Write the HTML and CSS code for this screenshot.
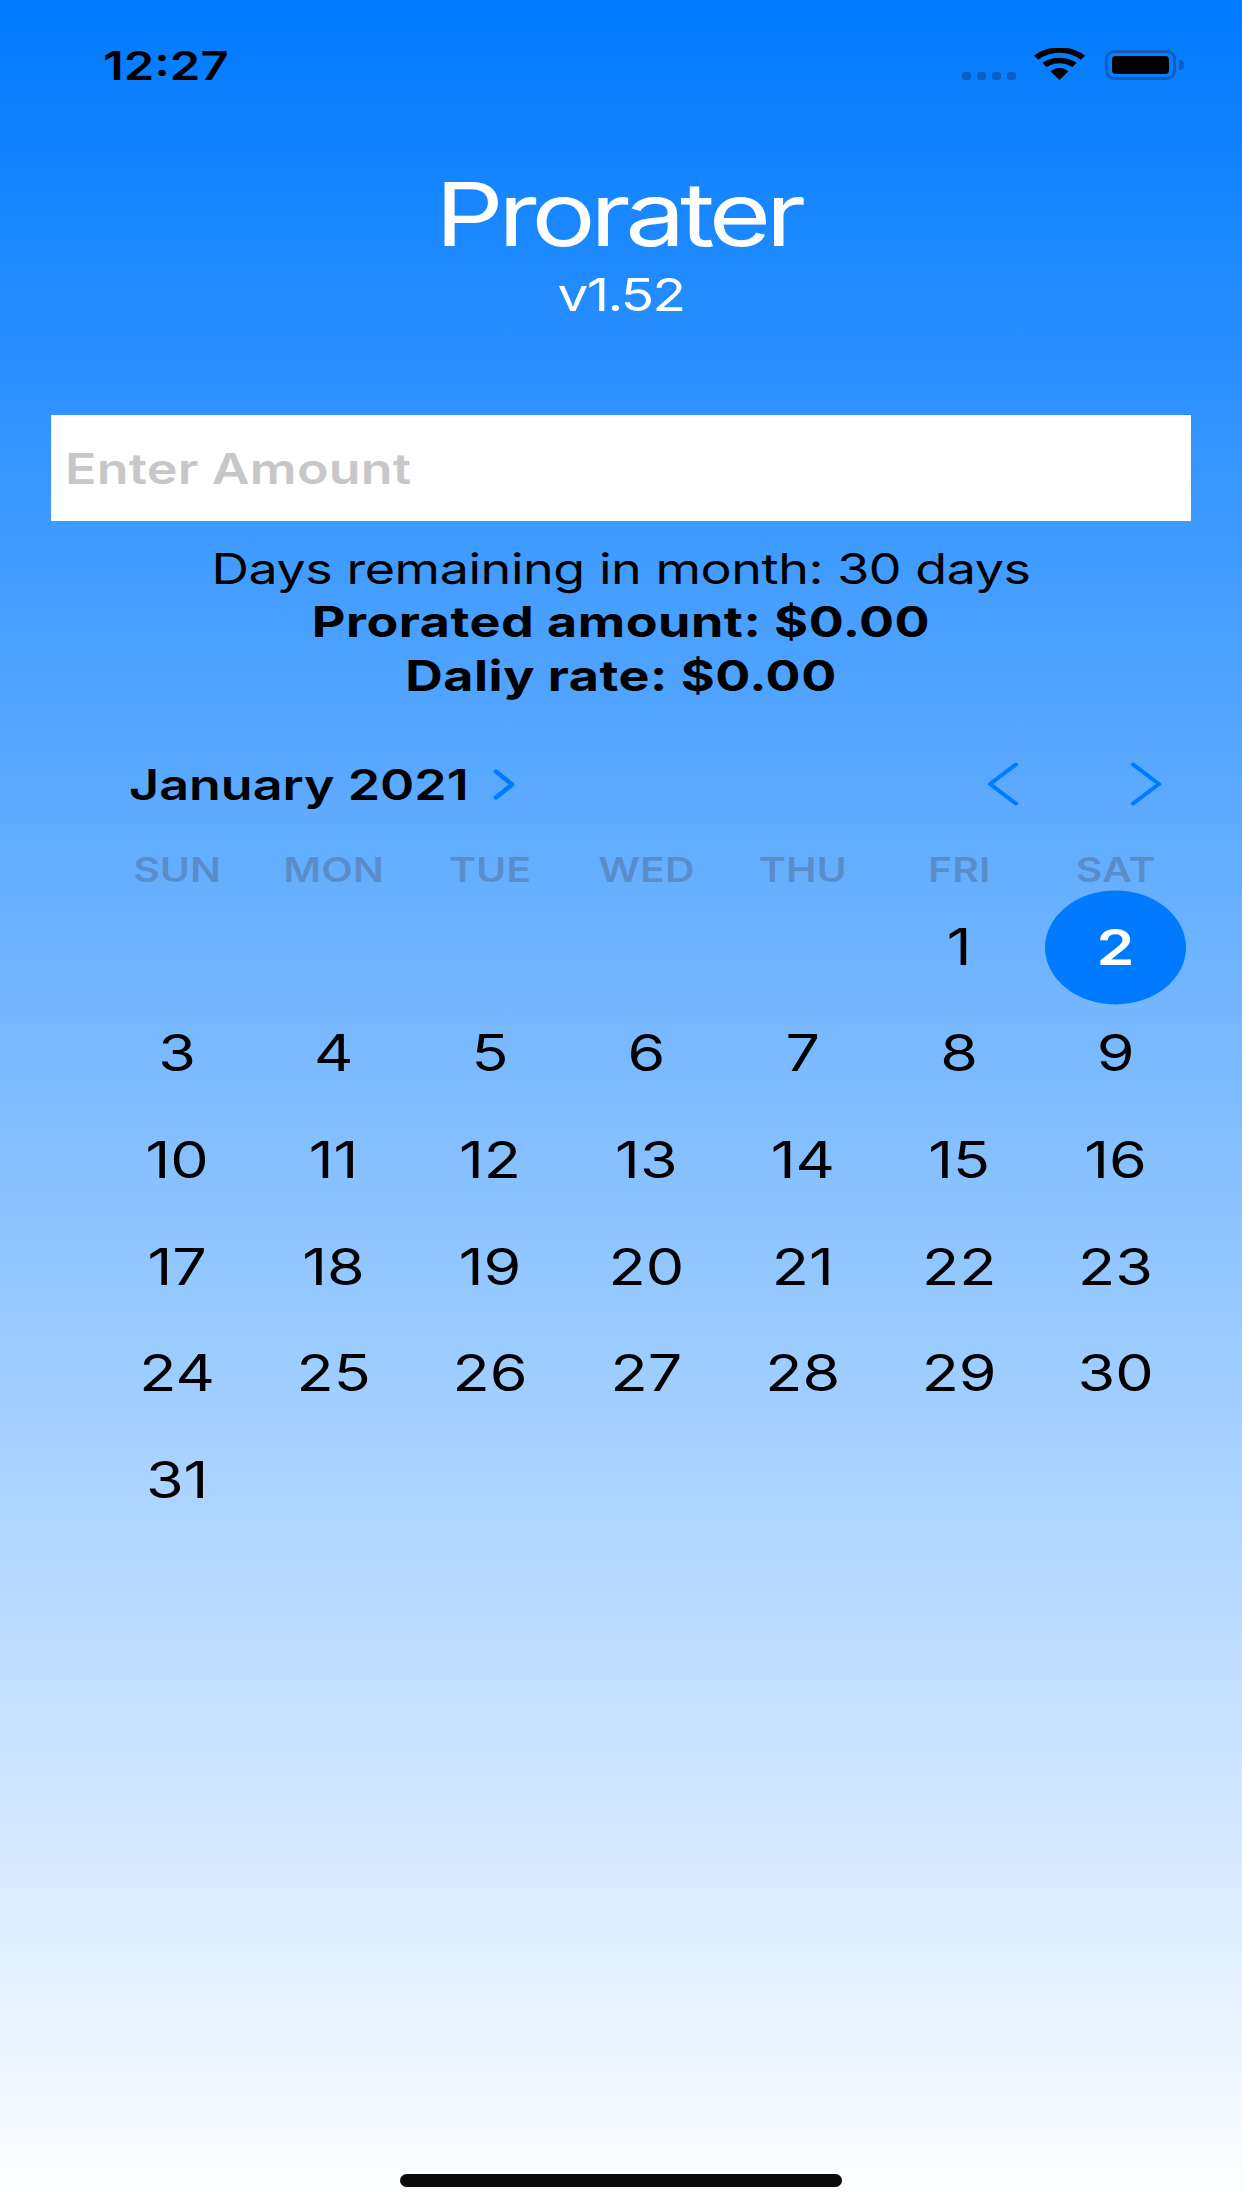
FILE: index.html
```html
<!DOCTYPE html>
<html lang="en">

<head>
    <meta charset="UTF-8">
    <meta name="viewport" content="width=device-width, initial-scale=1.0">
    <title>Prorater</title>
    <link rel="stylesheet" href="styles.css">
</head>

<body>
    <div class="screen">
        <div class="status-bar">
            <div class="status-time">12:27</div>
            <div class="status-icons">
                <div class="signal">
                    <span class="signal-dot"></span>
                    <span class="signal-dot"></span>
                    <span class="signal-dot"></span>
                    <span class="signal-dot"></span>
                </div>
                <svg class="wifi" width="53" height="32" viewBox="0 0 51 38" preserveAspectRatio="none">
                    <path d="M3 11.5C16 -0.5 35 -0.5 48 11.5" fill="none" stroke="#000" stroke-width="6.5"/>
                    <path d="M11 20C20 13 31 13 40 20" fill="none" stroke="#000" stroke-width="6.5"/>
                    <path d="M17 28C22 22.500 29 22.500 34 28L25.500 38Z" fill="#000"/>
                </svg>
                <div class="battery">
                    <div class="battery-level"></div>
                </div>
                <div class="battery-tip"></div>
            </div>
        </div>

        <h1 class="app-title">Prorater</h1>
        <div class="app-version">v1.52</div>

        <div class="amount-field">
            <input class="amount-input" type="text" placeholder="Enter Amount">
        </div>

        <div class="results">
            <div class="result-line">Days remaining in month: 30 days</div>
            <div class="result-line result-bold">Prorated amount: $0.00</div>
            <div class="result-line result-bold">Daliy rate: $0.00</div>
        </div>

        <div class="calendar">
            <div class="calendar-header">
                <div class="month-label">January 2021</div>
                <svg class="month-chevron" width="24" height="31" viewBox="0 0 24 38" preserveAspectRatio="none">
                    <path d="M4 3L20 19L4 35" fill="none" stroke="#007aff" stroke-width="5" stroke-linecap="round" stroke-linejoin="round"/>
                </svg>
                <div class="month-nav">
                    <svg width="32" height="44" viewBox="0 0 32 54" preserveAspectRatio="none">
                        <path d="M29 3L3 27L29 51" fill="none" stroke="#007aff" stroke-width="4.500" stroke-linecap="round" stroke-linejoin="round"/>
                    </svg>
                    <svg width="32" height="44" viewBox="0 0 32 54" preserveAspectRatio="none">
                        <path d="M3 3L29 27L3 51" fill="none" stroke="#007aff" stroke-width="4.500" stroke-linecap="round" stroke-linejoin="round"/>
                    </svg>
                </div>
            </div>

            <div class="weekdays">
                <div class="weekday">SUN</div>
                <div class="weekday">MON</div>
                <div class="weekday">TUE</div>
                <div class="weekday">WED</div>
                <div class="weekday">THU</div>
                <div class="weekday">FRI</div>
                <div class="weekday">SAT</div>
            </div>

            <div class="days">
                <div class="day"></div>
                <div class="day"></div>
                <div class="day"></div>
                <div class="day"></div>
                <div class="day"></div>
                <div class="day">1</div>
                <div class="day"><span class="day-selected">2</span></div>
                <div class="day">3</div>
                <div class="day">4</div>
                <div class="day">5</div>
                <div class="day">6</div>
                <div class="day">7</div>
                <div class="day">8</div>
                <div class="day">9</div>
                <div class="day">10</div>
                <div class="day">11</div>
                <div class="day">12</div>
                <div class="day">13</div>
                <div class="day">14</div>
                <div class="day">15</div>
                <div class="day">16</div>
                <div class="day">17</div>
                <div class="day">18</div>
                <div class="day">19</div>
                <div class="day">20</div>
                <div class="day">21</div>
                <div class="day">22</div>
                <div class="day">23</div>
                <div class="day">24</div>
                <div class="day">25</div>
                <div class="day">26</div>
                <div class="day">27</div>
                <div class="day">28</div>
                <div class="day">29</div>
                <div class="day">30</div>
                <div class="day">31</div>
            </div>
        </div>

        <div class="home-bar"></div>
    </div>
</body>

</html>
```

FILE: styles.css
```css
html, body {
    margin: 0;
    height: 2208px;
    overflow: hidden;
    background-color: white;
}

.screen {
    box-sizing: border-box;
    width: 1242px;
    height: 2208px;
    display: flex;
    flex-direction: column;
    font-family: Inter, "Liberation Sans", sans-serif;
    color: #000;
    background: linear-gradient(#007aff, #ffffff);
}

/* the reference is squashed vertically, so all the text is too */
.status-time,
.app-title,
.app-version,
.amount-input,
.result-line,
.month-label,
.weekday,
.day {
    transform: scaleY(0.82);
}

.status-bar {
    display: flex;
    justify-content: space-between;
    align-items: flex-start;
    height: 49px;
    padding: 41px 58px 0 103px;
}

.status-time {
    font-size: 49px;
    font-weight: 600;
    line-height: 49px;
}

.status-icons {
    display: flex;
    align-items: flex-end;
    margin-top: 7px;
}

.signal {
    display: flex;
    gap: 6px;
    margin-right: 17px;
}

.signal-dot {
    width: 9px;
    height: 8px;
    border-radius: 3px;
    background-color: #0a5fc0;
}

.battery {
    box-sizing: border-box;
    width: 71px;
    height: 30px;
    margin-left: 19px;
    padding: 3px 4px;
    border: 3px solid #0a5fc0;
    border-radius: 9px;
}

.battery-level {
    height: 100%;
    border-radius: 4px;
    background-color: #000;
}

.battery-tip {
    width: 5px;
    height: 10px;
    margin: 0 0 10px 3px;
    border-radius: 0 4px 4px 0;
    background-color: #0a5fc0;
}

.app-title {
    margin: 71px 0 0;
    padding-right: 6px;
    font-size: 107px;
    font-weight: 400;
    line-height: 107px;
    letter-spacing: -5.3px;
    text-align: center;
    color: white;
}

.app-version {
    margin-top: 1px;
    font-size: 55px;
    line-height: 52px;
    letter-spacing: -1.7px;
    text-align: center;
    color: white;
}

.amount-field {
    display: flex;
    align-items: center;
    width: 1140px;
    height: 106px;
    margin: 94px 0 0 51px;
    background-color: white;
}

.amount-input {
    box-sizing: border-box;
    width: 100%;
    height: 64px;
    padding: 2px 14px 0;
    border: none;
    border-radius: 0;
    outline: none;
    background: transparent;
    font-family: inherit;
    font-size: 52px;
    font-weight: 600;
    letter-spacing: 0.2px;
}

.amount-input::placeholder {
    color: #c7c7c9;
    opacity: 1;
}

.results {
    margin-top: 21px;
    font-size: 52px;
    line-height: 53.3px;
    letter-spacing: -0.45px;
    text-align: center;
}

.result-bold {
    font-weight: 700;
    letter-spacing: 0.5px;
}

.calendar {
    margin-top: 58px;
    padding: 0 49px 0 99px;
}

.calendar-header {
    display: flex;
    align-items: center;
    height: 49px;
    padding-left: 30px;
}

.month-label {
    font-size: 52px;
    font-weight: 600;
    line-height: 49px;
}

.month-chevron {
    margin-left: 23px;
}

.month-nav {
    display: flex;
    gap: 111px;
    margin-left: auto;
    margin-right: 31px;
}

.weekdays {
    display: grid;
    grid-template-columns: repeat(7, 156.4px);
    margin-top: 45px;
    font-size: 41px;
    font-weight: 600;
    line-height: 33px;
    text-align: center;
    color: rgba(60, 60, 67, 0.3);
}

.days {
    display: grid;
    grid-template-columns: repeat(7, 156.4px);
    grid-auto-rows: 106.6px;
    margin-top: 7px;
}

.day {
    display: flex;
    justify-content: center;
    align-items: center;
    font-size: 61px;
}

.day-selected {
    flex-shrink: 0;
    display: flex;
    justify-content: center;
    align-items: center;
    width: 141px;
    height: 139px;
    border-radius: 50%;
    background-color: #007aff;
    color: white;
    font-weight: 600;
}

.home-bar {
    flex-shrink: 0;
    width: 442px;
    height: 13px;
    margin: auto auto 21px;
    border-radius: 7px;
    background-color: #0a0a0a;
}
```
